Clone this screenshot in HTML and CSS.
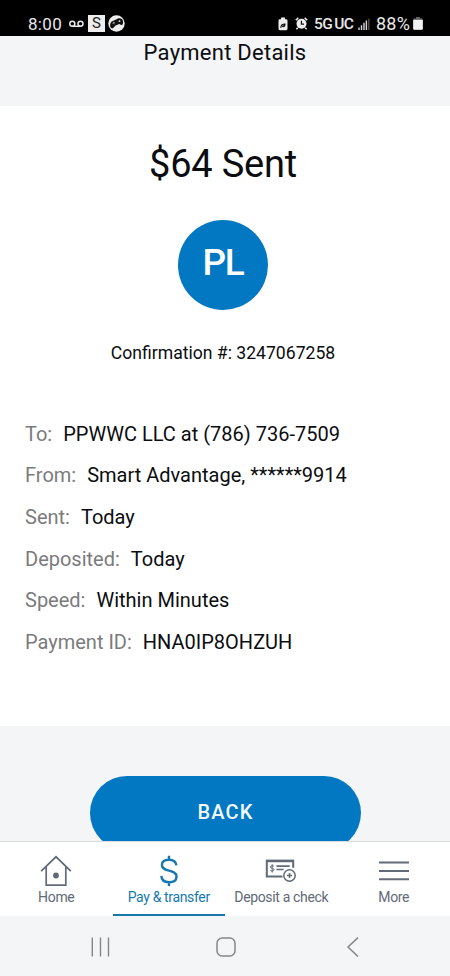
FILE: index.html
```html
<!DOCTYPE html>
<html lang="en">
<head>
<meta charset="utf-8">
<title>Payment Details</title>
<link rel="stylesheet" href="styles.css">
</head>
<body>
<div class="screen">
  <header class="status">
    <div class="status-left">
      <span class="clock">8:00</span>
      <svg class="voicemail" width="15" height="8" viewBox="0 0 15 8" fill="none" stroke="#e8e8e8" stroke-width="1.5"><circle cx="3.3" cy="3.7" r="2.5"/><circle cx="11.5" cy="3.7" r="2.5"/><path d="M3.3 6.3h8.2"/></svg>
      <span class="s-badge">S</span>
      <svg class="game" width="17" height="17" viewBox="0 0 17 17"><circle cx="8.5" cy="8.5" r="8.2" fill="#ededed"/><path d="M2.6 12.6C1.5 11 2.3 7.300 4 6.300l2-.8 3.500-1.700c2.500-1.100 5-.1 5.400 2 .5 2.400-.2 4.600-1.600 4.200L11.200 8.900 7.600 10.400 5.200 13c-.6.7-2 .4-2.600-.4Z" fill="#111"/><path d="M4.500 8.400l2.400-.9M5.300 6.800l.9 2.400" stroke="#bbb" stroke-width=".7"/><circle cx="11.500" cy="6.200" r=".9" fill="#ddd"/></svg>
    </div>
    <div class="status-right">
      <svg class="leaf" width="10" height="14" viewBox="0 0 10 14"><path d="M3 .6h4v1.600h1.100Q9.500 2.200 9.500 3.600v8.200q0 1.400-1.400 1.400H1.900Q.5 13.200.5 11.800V3.600Q.5 2.200 1.900 2.200H3Z" fill="#eee"/><path d="M2.400 10.700c-.3-3 1.500-4.200 5.200-4.300.1 3.200-1.500 4.300-3.700 3.700l-1 .9Z" fill="#111"/><path d="M3.200 9.700l2.500-1.800" stroke="#ddd" stroke-width=".6"/></svg>
      <svg class="alarm" width="13" height="13" viewBox="0 0 13 13"><circle cx="6.500" cy="6.800" r="5" fill="#eee"/><path d="M.8 3.300 3.300.9M12.200 3.300 9.700.9M2.800 10.800l-1.400 1.500M10.200 10.800l1.400 1.500" stroke="#eee" stroke-width="1.500"/><path d="M6.400 3.800v3.400H9" fill="none" stroke="#111" stroke-width="1.200"/></svg>
      <span class="network">5G<span class="uc">UC</span></span>
      <svg class="signal" width="12" height="12" viewBox="0 0 12 12"><path d="M1 9.500V12M3.500 7.300V12M6 4.700V12M8.400 2.600V12" stroke="#d8d8d8" stroke-width="1.400"/><path d="M10.800.4V12" stroke="#555" stroke-width="1.300"/></svg>
      <span class="percent">88%</span>
      <svg class="battery" width="10" height="13" viewBox="0 0 10 13"><path d="M3 .2h4v1.500H3Z" fill="#777"/><rect x=".2" y="1.500" width="9.600" height="11.300" rx="1.200" fill="#777"/><path d="M.2 3h9.600v8.600q0 1.200-1.200 1.200H1.400Q.2 12.800.2 11.600Z" fill="#f2f2f2"/></svg>
    </div>
  </header>

  <div class="title-bar"><h1>Payment Details</h1></div>

  <main class="card">
    <h2 class="amount">$64 Sent</h2>
    <div class="avatar"><span>PL</span></div>
    <p class="confirm">Confirmation #: 3247067258</p>
    <dl class="details">
      <div class="row"><dt>To:</dt><dd>PPWWC LLC at (786) 736-7509</dd></div>
      <div class="row"><dt>From:</dt><dd>Smart Advantage, ******9914</dd></div>
      <div class="row"><dt>Sent:</dt><dd>Today</dd></div>
      <div class="row"><dt>Deposited:</dt><dd>Today</dd></div>
      <div class="row"><dt>Speed:</dt><dd>Within Minutes</dd></div>
      <div class="row"><dt>Payment ID:</dt><dd>HNA0IP8OHZUH</dd></div>
    </dl>
  </main>

  <div class="actions"><button class="back">BACK</button></div>

  <nav class="tabs">
    <a class="tab"><svg width="32" height="32" viewBox="0 0 32 32" fill="none" stroke="#626977" stroke-width="1.700"><path d="M1.200 16.200 16 1.800l14.800 14.400M6.200 12v18.200h19.600V12"/><circle cx="16" cy="20.500" r="2.900" fill="#626977" stroke="none"/></svg><span>Home</span></a>
    <a class="tab active"><svg width="32" height="32" viewBox="0 0 32 32" fill="none" stroke="#1878ad" stroke-width="2.400"><path d="M16 .8v4M16 27v4M23.400 10.400C23 6.600 20.400 4.700 16 4.700c-4.300 0-7.100 2-7.100 5.300 0 7.600 14.600 3.800 14.600 11.400 0 3.600-2.900 5.800-7.500 5.800s-7.500-2.200-7.600-6.300"/></svg><span>Pay &amp; transfer</span></a>
    <a class="tab"><svg width="32" height="32" viewBox="0 0 32 32" fill="none" stroke="#626977"><path d="M17.500 21.400H1.800V6.200h26.400v6.500" stroke-width="2"/><path d="M1 5.700h28" stroke-width="2.200"/><path d="M11.500 11.200h13.200M11.500 14.500h7.200" stroke-width="1.700"/><path d="M9 11.500c-.3-1-3.600-1.300-3.600.4 0 1.900 3.700.9 3.700 2.900 0 1.700-3.500 1.600-3.900.2M7.200 9.200v8.400" stroke-width="1"/><circle cx="24.500" cy="20.500" r="5.700" stroke-width="1.500"/><path d="M24.500 17.900v5.200M21.900 20.500h5.200" stroke-width="1.500"/></svg><span>Deposit a check</span></a>
    <a class="tab"><svg width="32" height="32" viewBox="0 0 32 32" fill="none" stroke="#626977" stroke-width="2.100"><path d="M1 7.500h30M1 16h30M1 24.300h30"/></svg><span>More</span></a>
  </nav>

  <footer class="system">
    <svg width="20" height="20" viewBox="0 0 20 20" fill="none" stroke="#85868a" stroke-width="1.400"><path d="M2.300.5v19M10.500.5v19M18.500.5v19"/></svg>
    <svg width="20" height="20" viewBox="0 0 20 20" fill="none" stroke="#85868a" stroke-width="1.500"><rect x="1" y="1" width="18" height="18" rx="5.200"/></svg>
    <svg width="20" height="20" viewBox="0 0 20 20" fill="none" stroke="#85868a" stroke-width="1.500"><path d="M16 .6 6 10l10 9.500"/></svg>
  </footer>
</div>
</body>
</html>
```
FILE: styles.css
```css
* { box-sizing: border-box; margin: 0; padding: 0; }
body { font-family: Roboto, "Liberation Sans", sans-serif; color: #0b0d10; background: #fff; }
.screen { width: 450px; height: 976px; overflow: hidden; display: flex; flex-direction: column; background: #f4f5f7; }
.status { height: 36px; flex: none; background: #000; color: #e8e8e8; display: flex; justify-content: space-between; padding: 10px 27px 0 28px; }
.status-left, .status-right { display: flex; align-items: center; height: 27px; }
.clock { font-size: 17px; letter-spacing: .3px; width: 41px; white-space: nowrap; }
.voicemail { margin-right: 4px; }
.s-badge { width: 17px; height: 17px; background: #ededed; color: #222; font-size: 15px; line-height: 17px; text-align: center; margin-right: 3px; }
.leaf { margin-right: 7px; }
.alarm { margin-right: 6px; }
.network { font-size: 15.500px; font-weight: 500; width: 44px; white-space: nowrap; letter-spacing: -.6px; }
.uc { margin-left: 2px; }
.signal { margin-right: 6px; }
.percent { font-size: 18px; width: 37px; white-space: nowrap; letter-spacing: .2px; }
.title-bar { height: 70px; flex: none; padding-top: 3px; text-align: center; }
h1 { font-size: 22px; line-height: 28px; font-weight: 400; letter-spacing: .25px; }
.card { height: 620px; flex: none; background: #fff; padding-top: 33px; }
.amount { font-size: 38px; line-height: 50px; font-weight: 400; text-align: center; margin-right: 4px; letter-spacing: -.2px; }
.avatar { width: 90px; height: 90px; border-radius: 50%; background: #0278c2; color: #fff; margin: 31px auto 0 178px; text-align: center; font-size: 37px; line-height: 86px; font-weight: 500; letter-spacing: -1.200px; }
.confirm { margin-top: 33px; text-align: center; margin-right: 4px; font-size: 17.600px; line-height: 20px; }
.details { margin-top: 50.700px; padding-left: 25px; font-size: 20px; }
.row { display: flex; gap: 11px; height: 41.700px; line-height: 41.700px; white-space: nowrap; }
dt { color: #7b7b7d; }
.actions { height: 115px; flex: none; overflow: hidden; padding: 50px 89px 0 90px; }
.back { display: block; width: 271px; height: 74px; border: 0; border-radius: 37px; background: #0278c2; color: #f4faff; font: 500 20px/71px Roboto, sans-serif; letter-spacing: 1.200px; padding-bottom: 2px; }
.tabs { height: 75px; flex: none; background: #fff; border-top: 1px solid #d9dbe0; display: grid; grid-template-columns: repeat(4, 1fr); }
.tab { display: flex; flex-direction: column; align-items: center; padding-top: 13px; color: #626977; font-size: 14px; letter-spacing: -.35px; line-height: 21px; white-space: nowrap; }
.tab svg { flex: none; }
.active { color: #1878ad; border-bottom: 2px solid #1878ad; }
.system { height: 60px; flex: none; display: flex; justify-content: space-between; padding: 21px 88px 0 90px; }
```
